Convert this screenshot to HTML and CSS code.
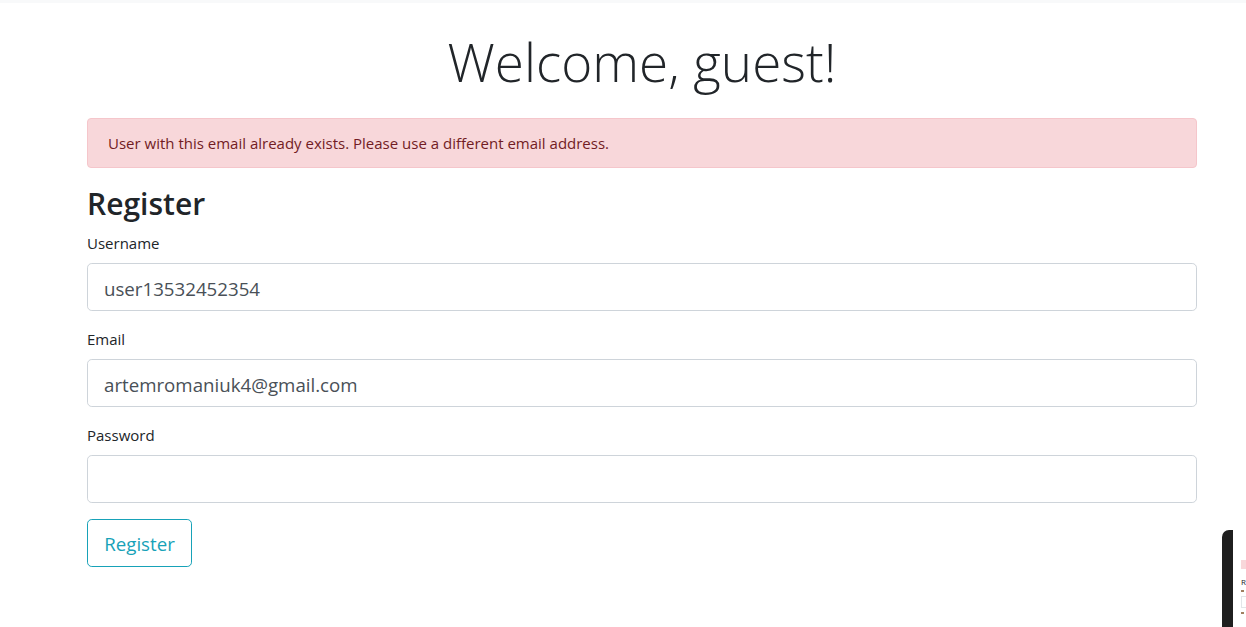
FILE: index.html
```html
<!DOCTYPE html>
<html lang="en">
<head>
<meta charset="utf-8">
<title>Register</title>
<link rel="stylesheet" href="styles.css">
</head>
<body>
<div class="topbar"></div>
<main class="container">
  <h1 class="display">Welcome, guest!</h1>
  <div class="alert">User with this email already exists. Please use a different email address.</div>
  <h2 class="title">Register</h2>
  <form class="form">
    <div class="group">
      <label class="label" for="username">Username</label>
      <input class="control" id="username" type="text" value="user13532452354">
    </div>
    <div class="group">
      <label class="label" for="email">Email</label>
      <input class="control" id="email" type="email" value="artemromaniuk4@gmail.com">
    </div>
    <div class="group">
      <label class="label" for="password">Password</label>
      <input class="control" id="password" type="password">
    </div>
    <button class="btn" type="button">Register</button>
  </form>
</main>
<div class="preview">
  <div class="preview-page">
    <div class="mini-alert"></div>
    <div class="mini-title">R</div>
    <div class="mini-label"></div>
    <div class="mini-input"></div>
    <div class="mini-label"></div>
  </div>
</div>
</body>
</html>
```
FILE: styles.css
```css
* { box-sizing: border-box; }
html, body { margin: 0; padding: 0; }
body {
  font-family: "Segoe UI", "Open Sans", "Liberation Sans", sans-serif;
  font-size: 15px;
  line-height: 24px;
  color: #212529;
  background: #fff;
  width: 1246px;
  height: 627px;
  overflow: hidden;
  position: relative;
}
.topbar { height: 3px; background: #f8f9fa; }
.container { width: 1110px; margin-left: 87px; }
.display {
  margin: 25px 0 23px;
  font-size: 53px;
  font-weight: 300;
  line-height: 67px;
  text-align: center;
  padding-left: 0;
}
.alert {
  padding: 12px 20px;
  margin-bottom: 16px;
  border: 1px solid #f5c6cb;
  border-radius: 4px;
  background: #f8d7da;
  color: #721c24;
  line-height: 25px;
  height: 50px;
}
.title {
  margin: 0 0 8px;
  font-size: 30px;
  font-weight: 600;
  line-height: 38px;
  padding-top: 1px;
  height: 39px;
}
.form { margin: 0; }
.group { margin-bottom: 16px; }
.label { display: block; margin-bottom: 8px; line-height: 25px; height: 24px; }
.control {
  display: block;
  width: 100%;
  height: 48px;
  padding: 9px 16px 7px;
  font-family: inherit;
  font-size: 18.7px;
  line-height: 30px;
  color: #495057;
  background: #fff;
  border: 1px solid #ced4da;
  border-radius: 4.8px;
  outline: none;
}
.btn {
  display: block;
  width: 105px;
  height: 48px;
  padding: 8px 0 6px;
  font-family: inherit;
  font-size: 18.7px;
  line-height: 30px;
  color: #17a2b8;
  background: transparent;
  border: 1px solid #17a2b8;
  border-radius: 4.8px;
  text-align: center;
}
.preview {
  position: absolute;
  left: 1222px;
  top: 530px;
  width: 60px;
  height: 110px;
  background: #1f1f1f;
  border-radius: 7px 0 0 0;
  padding-left: 11px;
}
.preview-page {
  height: 100%;
  background: #fff;
  padding: 30px 0 0 8px;
}
.mini-alert { height: 9px; background: #f8d7da; }
.mini-title { font-size: 8px; line-height: 1; margin-top: 9px; color: #212529; }
.mini-label { width: 3px; height: 2px; margin-top: 4px; background: #a08060; }
.mini-input { height: 12px; margin-top: 4px; border: 1px solid #e3e6e9; border-right: 0; }
```
